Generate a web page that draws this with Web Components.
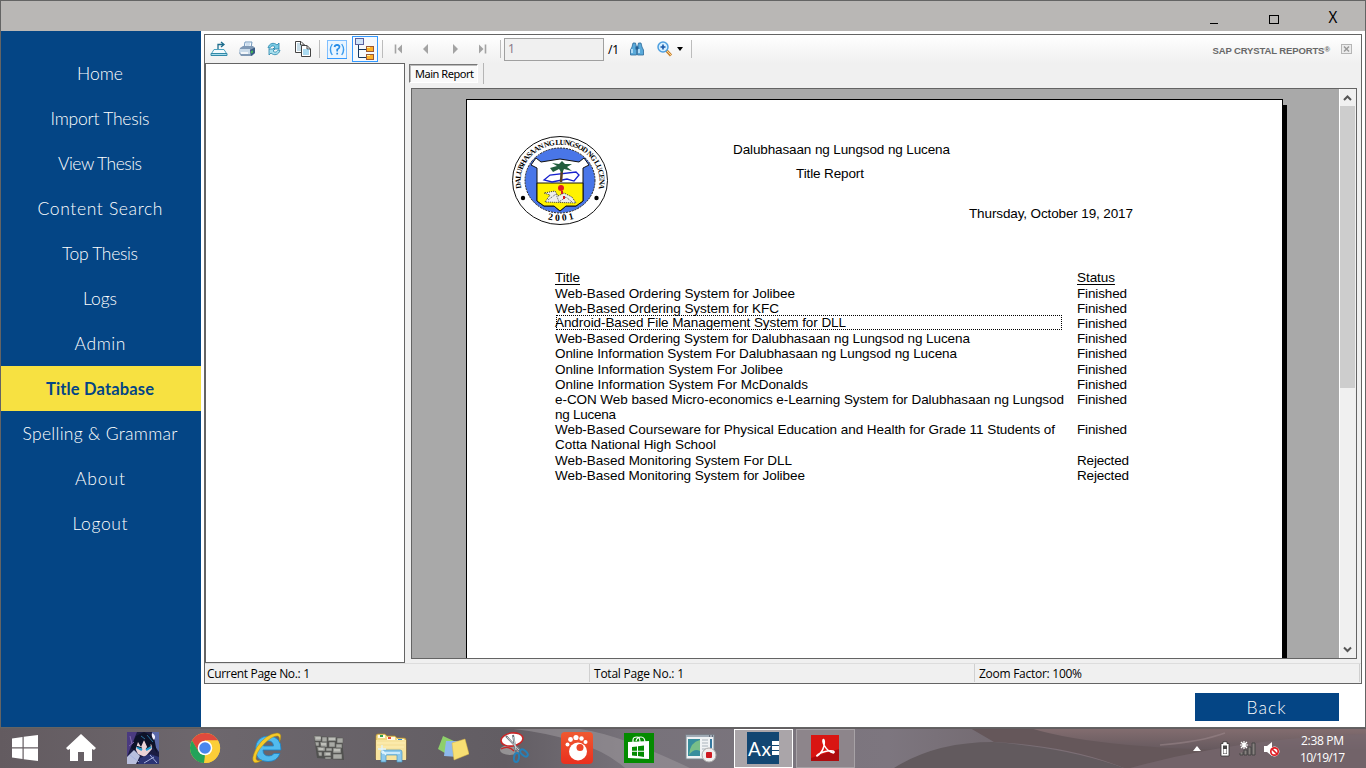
<!DOCTYPE html>
<html lang="en">
<head>
<meta charset="utf-8">
<title>Title Report</title>
<style>
html,body{margin:0;width:1366px;height:768px;overflow:hidden;background:#fff}
</style>
</head>
<body>
<desktop-shell></desktop-shell>
<script>
const define=(name,html,setup)=>{
  const t=document.createElement('template');
  t.innerHTML=html;
  customElements.define(name,class extends HTMLElement{
    constructor(){super();this.attachShadow({mode:'open'}).append(t.content.cloneNode(true));}
    connectedCallback(){if(setup)setup(this,this.shadowRoot);}
  });
};

/* Text run whose tracking is adjusted so that it spans the width in "w". */
define('fit-text',`<style>:host{display:inline-block;white-space:pre;text-align:left}:host([line]) span{text-decoration:underline;text-decoration-thickness:1px;text-underline-offset:2px;text-decoration-skip-ink:none}span{display:inline-block}</style><span><slot></slot></span>`,(el,root)=>{
  const w=+el.getAttribute('w'),s=root.querySelector('span');
  const n=el.textContent.length;
  el.style.width=w+'px';
  const nat=s.getBoundingClientRect().width;
  if(n>1&&nat)s.style.letterSpacing=((w-nat)/(n-1))+'px';
});

const icons={
export:[18,16,`<path d="M8 10V3.500H13M11 1L14 3.500L11 6" fill="none" stroke="#1d6c8c" stroke-width="1.300"/><path d="M4 8.500L1.500 12.500H16.500L14 8.500Z" fill="#f2fafd" stroke="#4da3c0"/><path d="M1 12.500H17V14.500H1Z" fill="#a9dcec" stroke="#3089a8"/>`],
print:[18,16,`<path d="M6 7L7 1H14L13 7" fill="#f4faff" stroke="#7298bd"/><path d="M8 3h4M7.500 5h4" stroke="#a9c2da"/><path d="M2 7L5 5H15L17 7V12L14 15H3L1 12Z" fill="#8099b5"/><path d="M2 8H12V13H3L1 11Z" fill="#cadbea"/><path d="M12 9L17 6.500V12L13 15Z" fill="#385b83"/><path d="M3 12H10" stroke="#fff" stroke-width="1.500"/><path d="M13 10l2-.6v2l-2 1z" fill="#43b853"/>`],
refresh:[16,16,`<path d="M2 7C3 2 8 1 11 4L13 2V8H7L9 6C7 4 5 5 4 7Z" fill="#7bcbe4" stroke="#2784ab" stroke-width=".8"/><path d="M14 9C13 14 8 15 5 12L3 14V8H9L7 10C9 12 11 11 12 9Z" fill="#a8e0ee" stroke="#2784ab" stroke-width=".8"/>`],
copy:[18,18,`<path d="M1.500 1.500H7L10.500 5V12.500H1.500Z" fill="#fff" stroke="#444"/><path d="M6.500 1.500V5H10.500" fill="none" stroke="#444"/><path d="M3 4h3M3 6h5M3 8h5M3 10h5" stroke="#8bb9d0"/><path d="M7.500 5.500H13L16.500 9V16.500H7.500Z" fill="#fff" stroke="#444"/><path d="M13 5.500V9H16.500" fill="none" stroke="#444"/><path d="M9 10h6M9 12h6M9 14h6" stroke="#58b8e4" stroke-width="1.200"/>`],
help:[20,20,`<rect x=".5" y=".5" width="19" height="18" fill="#eaf5ff" stroke="#80bfff"/><path d="M0 18.500H20" stroke="#3399ff"/><path d="M5.300 4Q1.500 9.500 5.300 15M14.700 4Q18.500 9.500 14.700 15" fill="none" stroke="#3a9bed" stroke-width="1.300"/><path d="M7.500 7Q8 4.800 10 4.800Q12.600 5 12.500 7Q12.300 8.500 10.200 9.500V11.400M10.200 12.800v1.800" fill="none" stroke="#258be7" stroke-width="1.700"/>`],
tree:[26,26,`<rect x=".5" y=".5" width="25" height="25" fill="#f6f9fd" stroke="#3399ff"/><path d="M6.500 8V21.500H14M6.500 13.500H14" fill="none" stroke="#17375e"/><rect x="3.500" y="2.500" width="8" height="6" fill="#cfe4fa" stroke="#5b5f9c"/><rect x="14.500" y="10.500" width="7" height="5" fill="#ffb128" stroke="#9a5836"/><rect x="14.500" y="18.500" width="7" height="5" fill="#ffb128" stroke="#9a5836"/><path d="M15 11.500h3M15 19.500h3" stroke="#fff09c"/>`],
first:[12,12,`<path d="M2.500 1.500V10.500" stroke="#a3a3a3" stroke-width="1.600"/><path d="M9 1.500V10.500L4.500 6Z" fill="#a3a3a3"/>`],
prev:[12,12,`<path d="M8 1V11L3 6Z" fill="#a3a3a3"/>`],
next:[12,12,`<path d="M4 1V11L9 6Z" fill="#a3a3a3"/>`],
last:[12,12,`<path d="M9.500 1.500V10.500" stroke="#a3a3a3" stroke-width="1.600"/><path d="M3 1.500V10.500L7.500 6Z" fill="#a3a3a3"/>`],
find:[14,14,`<path d="M2 5L3 1H5.500L6.500 5V13H.5V8Z" fill="#5aaada" stroke="#2c699b" stroke-width=".8"/><path d="M12 5L11 1H8.500L7.500 5V13H13.500V8Z" fill="#5aaada" stroke="#2c699b" stroke-width=".8"/><rect x="5.500" y="4.500" width="3" height="3" fill="#245f92"/><path d="M2 7v4M9 7v4" stroke="#ccecff" stroke-width="1.500"/>`],
zoom:[16,16,`<path d="M9 9L14 14.500" stroke="#c9822f" stroke-width="3"/><path d="M10 10L14 14" stroke="#ffd88f"/><circle cx="6" cy="6" r="5" fill="#d7f0ff" stroke="#4d9fe0" stroke-width="1.500"/><path d="M3.500 6h5M6 3.500v5" stroke="#1857a8" stroke-width="1.600"/>`],
closex:[11,11,`<rect x=".5" y=".5" width="10" height="9" fill="#ececec" stroke="#b5b5b5"/><path d="M3 2.500L8 7.500M8 2.500L3 7.500" stroke="#999" stroke-width="1.500"/>`],
up:[17,17,`<path d="M5 11L8.500 7.500L12 11" fill="none" stroke="#555" stroke-width="2"/>`],
down:[17,17,`<path d="M5 6.500L8.500 10L12 6.500" fill="none" stroke="#555" stroke-width="2"/>`],
windows:[28,28,`<path d="M1 4.500L11.500 3V13.300H1ZM12.700 2.800L27 1V13.300H12.700ZM1 14.500H11.500V25L1 23.500ZM12.700 14.500H27V27L12.700 25.200Z" fill="#fff"/>`],
home:[32,30,`<path d="M16 1L31 15L29 17L27 16V28H19V19H13V28H5V16L3 17L1 15Z" fill="#fff"/>`],
anime:[32,32,`<rect width="32" height="32" fill="#1b1c42"/><path d="M0 0H10L3 17L0 25Z" fill="#4a3a80"/><path d="M25 0H32V20L27 13Z" fill="#5a68a8"/><path d="M9 9L24 8L25 17L18 25L11 22L8 16Z" fill="#ecd3d6"/><path d="M4 16L9 4L17 0L27 5L30 21L24 12L21 17L17 8L14 15L11 10L8 19Z" fill="#0d1228"/><path d="M25 1Q30 4 27 8Q24 5 25 1Z" fill="#eef"/><path d="M10 15L15 18M19 18L24 15" stroke="#1c9bd0" stroke-width="2.400"/><path d="M9 14L15 16M19 16.500L24 13.500" stroke="#123"/><path d="M14 4L18 7M20 3L26 10" stroke="#276f9b"/><path d="M0 25L7 18L13 24L9 32H0Z" fill="#b9bfdd"/><path d="M13 26L23 22L32 25V32H11Z" fill="#2c3474"/><path d="M3 23L12 30M17 31L27 25M23 23L30 31" stroke="#a7b1df"/><path d="M3 4L5 12M2 14L7 10" stroke="#8069ad"/>`],
chrome:[32,32,`<circle cx="16" cy="16" r="15" fill="#fbce38"/><path d="M3 8.500A15 15 0 0 1 29 8.500H16L9.500 20Z" fill="#de4a3d"/><path d="M3 8.500L9.800 20L16 23L15 31A15 15 0 0 1 3 8.500Z" fill="#24a35a"/><path d="M16 8.500H29A15 15 0 0 1 15 31L22 19Z" fill="#fbce38"/><circle cx="16" cy="16" r="7.300" fill="#fff"/><circle cx="16" cy="16" r="5.800" fill="#4886ee"/>`],
ie:[32,32,`<path d="M30 18H12Q12 24 18 24Q21 24 23 21.500H29Q26 29.500 17 29.500Q4.500 29.500 4.500 17Q5 4.500 17.500 4Q30.500 4.500 30 18ZM12.500 14H22.500Q22 9 17.500 9Q13 9 12.500 14Z" fill="#52bbee" stroke="#1983c6" stroke-width=".8"/><path d="M28.500 10Q32 1 26 1Q15 2 6 15Q-1 28 3.500 30.500Q6.500 31.500 11 28Q6 30 5 27Q4.500 21 13 12Q22 3 27 4Q29 5 28.500 10Z" fill="#f6ca28" stroke="#ae8910" stroke-width=".5"/>`],
wall:[32,32,`<path d="M1 4L29 6L31 28L4 26Z" fill="#50514f"/><g fill="#a9aaa5" stroke="#5f605d" stroke-width=".6"><path d="M1 4h7v5H2zM9 5h5v5H9zM15 5h8v4h-8zM24 6h6v5h-6zM2 10h4v4H3zM7 10h7v5H8zM16 10h6v5h-6zM23 12h6v4h-6zM4 15h8v4H5zM13 16h6v3h-6zM20 16h8v5h-8zM5 20h4v4H6zM11 20h7v4h-7zM20 22h9v5h-9zM12 25h6v2h-6z"/></g><path d="M3 6h5M16 7h6M8 12h5M21 18h6M6 17h4M13 22h4" stroke="#d3d4cd"/>`],
explorer:[34,32,`<path d="M2 4Q2 2 4 2H11L13 4H21L23 6H30Q32 6 32 8V27H2Z" fill="#f1d981" stroke="#b58d2c" stroke-width=".7"/><path d="M4 3h7v3H4zM13 5h8v3h-8zM23 7h7v3h-7z" fill="#fffbe6"/><path d="M6 3h3v2H6z" fill="#32a24b"/><path d="M14 5h3v2h-3z" fill="#e54a35"/><path d="M24 7h4v2h-4z" fill="#318bd4"/><path d="M2 8H32V28H2Z" fill="#f7e39e"/><path d="M3 11H31M3 15H30" stroke="#fff0b6"/><path d="M7 30V20Q7 18 9 18H26Q28 18 28 20V30H23V23H12V30Z" fill="#8dc9ed" stroke="#4a95bf" stroke-width=".7"/><path d="M9 19L12 23M8 21h18M8 13v8M4 17h8" stroke="#dff5ff" stroke-width="1.300"/>`],
notes:[32,30,`<path d="M6 3L19 9L13 23L1 16Z" fill="#8ed06a"/><path d="M9 8L22 8L21 24L7 23Z" fill="#8db9eb"/><path d="M15 10L28 6L32 21L17 27Z" fill="#f7df73" stroke="#dbb744" stroke-width=".5"/>`],
snip:[32,32,`<ellipse cx="11" cy="18" rx="10" ry="5" fill="#aaa" opacity=".7"/><ellipse cx="13" cy="7.500" rx="11" ry="6.500" fill="#fff" stroke="#c92727" stroke-width="1.600" transform="rotate(-8 13 7.500)"/><path d="M2 17Q9 13 15 19" stroke="#c92727" stroke-width="1.300" fill="none"/><path d="M7 4L21 19M14 3L17 20" stroke="#6d747b" stroke-width="2"/><path d="M8 5L20 18M14.500 5L17 18" stroke="#e0e4e7" stroke-width=".8"/><g fill="none" stroke="#2680b8" stroke-width="2"><ellipse cx="25" cy="21" rx="2.500" ry="4.500" transform="rotate(-48 25 21)"/><ellipse cx="17.500" cy="25.500" rx="2.500" ry="4.500" transform="rotate(8 17.500 25.500)"/></g>`],
gom:[32,32,`<defs><linearGradient id="g" x2="0" y2="1"><stop stop-color="#ef5930"/><stop offset="1" stop-color="#ea301f"/></linearGradient></defs><rect width="32" height="32" rx="4" fill="url(#g)"/><g fill="#fff"><circle cx="17" cy="19.500" r="9"/><circle cx="6.500" cy="12.500" r="2"/><circle cx="9.500" cy="7.500" r="2.400"/><circle cx="15" cy="5.500" r="2.600"/><circle cx="20.500" cy="6.500" r="2.200"/><circle cx="24.500" cy="10" r="2"/></g><circle cx="19" cy="15.500" r="3.500" fill="#ed4528"/>`],
store:[30,30,`<rect width="30" height="30" fill="#048b00"/><path d="M4 9L25 8V26L4 25Z" fill="#fff"/><path d="M9 10V7Q9 4 13 4Q16 4 16 9M12 8Q13 4 17 4Q21 4 21 10" fill="none" stroke="#fff" stroke-width="1.200"/><path d="M8 14l5-.6v4.300H8zm6-.7l6-.8v5.200h-6zM8 18.700h5V23l-5-.5zm6 0h6v5.200l-6-.8z" fill="#048b00"/>`],
recorder:[32,30,`<rect x="1" y="2" width="28" height="24" fill="#eff2f4" stroke="#7b8890"/><path d="M1 3H29" stroke="#9faab5" stroke-width="2"/><path d="M24 3h1m2 0h1" stroke="#334"/><path d="M3 6h12v17H3z" fill="#388e9d"/><path d="M4 22Q5 9 15 7V18Q9 15 4 22Z" fill="#78be88"/><path d="M17 7h6M17 10h6M17 13h6M17 16h4" stroke="#aab4bc"/><path d="M26 6v9" stroke="#3478a0" stroke-width="2"/><circle cx="24" cy="22" r="7" fill="#eee" stroke="#aaa"/><rect x="21" y="19" width="6" height="6" rx="1" fill="#cd1920"/>`],
pdf:[28,26,`<rect width="28" height="26" fill="#ae0b0e"/><path d="M0 0H28V14L0 23Z" fill="#d91512"/><path d="M6 21Q11 18 13 11Q14 5 12.500 4.500Q11 5 13 10Q17 17 22.500 18Q24 17 22 16Q15 15 7 19.500Q5 21 6 21Z" fill="none" stroke="#fff" stroke-width="1.500"/>`],
tri:[8,6,`<path d="M0 5L4 0L8 5Z" fill="#fff"/>`],
battery:[10,16,`<path d="M3 .7H7V2.500H9V15H1V2.500H3Z" fill="#fff" stroke="#333" stroke-width=".8"/><path d="M3 4.500H7V13H3Z" fill="#444"/><path d="M3.500 8H6.500V12.500H3.500Z" fill="#fff"/>`],
signal:[17,15,`<path d="M1 12v2h3v-3M5 14V9h3v5zM9 14V6h3v8zM13 14V2h3v12z" fill="#87817f" stroke="#444"/><path d="M5 0v8M1 4h8M2 1l6 6M8 1L2 7" stroke="#fff" stroke-width="1.200"/>`],
volume:[17,16,`<path d="M1 5H4L9 1V15L4 11H1Z" fill="#fff"/><circle cx="11.500" cy="10.500" r="4.500" fill="#e44" stroke="#fff"/><circle cx="11.500" cy="10.500" r="3.700" fill="#fff" stroke="#df1e24" stroke-width="1.700"/><path d="M9 8L14 13" stroke="#df1e24" stroke-width="1.700"/>`]
};
define('app-icon',`<style>:host{display:block;flex:none}svg{display:block}</style><div></div>`,(el,root)=>{
  const [w,h,p]=icons[el.getAttribute('name')];
  root.querySelector('div').innerHTML=`<svg width="${w}" height="${h}" viewBox="0 0 ${w} ${h}">${p}</svg>`;
});

define('title-bar',`<style>
:host{display:flex;justify-content:flex-end;box-sizing:border-box;height:30px;background:#b9b7b5;font:16px "Noto Sans",sans-serif;color:#000}
div{width:60px;display:flex;justify-content:center}
.m i{width:8px;height:1px;background:#000;margin-top:22px}
.r i{width:8px;height:7px;border:1px solid #000;margin-top:14px;margin-right:1px}
.x{line-height:30px;font-size:15px}.x span{transform:scaleY(1.12);display:block}
</style><div class="m"><i></i></div><div class="r"><i></i></div><div class="x" style="width:58px"><span>X</span></div><b style="width:3px"></b>`);

define('nav-item',`<style>:host{display:flex;height:45px;align-items:center;justify-content:center;color:#fff;font:300 17.500px/45px Lato,sans-serif}
:host([active]){background:#f7e141;color:#044585;font-weight:700;font-size:16.500px;line-height:46px}
</style><slot></slot>`);
define('side-nav',`<style>:host{display:block;box-sizing:border-box;width:200px;height:696px;background:#044585;padding-top:20px}fit-text{position:relative;left:-1px}</style>
<nav>${[['Home',46],['Import Thesis',99],['View Thesis',84],['Content Search',125],['Top Thesis',76],['Logs',34],['Admin',51],['Title Database',108,1],['Spelling &amp; Grammar',155],['About',50],['Logout',55]].map(([t,w,a])=>`<nav-item ${a?'active':''}><fit-text w="${w}">${t}</fit-text></nav-item>`).join('')}</nav>`);

define('tool-bar',`<style>
:host{display:flex;height:28px;align-items:center;background:linear-gradient(#fff,#f0f0f0);font:12px "Noto Sans",sans-serif;color:#000;padding-left:5px}
.s{width:1px;height:18px;background:#bcbcbc}
.n{box-sizing:border-box;width:100px;height:23px;border:1px solid #a0a0a0;background:#f0f0f0;color:#8b7b8b;line-height:19px;padding-left:3px}
.d{border:3px solid transparent;border-top:4px solid #000;border-bottom:0}
.brand{font:bold 9.500px "Liberation Sans",sans-serif;color:#686868;margin-left:auto;padding-top:3px}
sup{font-size:7.500px;line-height:0;vertical-align:2px}
</style>
<app-icon name="export"></app-icon><app-icon name="print" style="margin-left:10px"></app-icon><app-icon name="refresh" style="margin-left:10px"></app-icon><app-icon name="copy" style="margin-left:12px"></app-icon>
<i class="s" style="margin-left:7px"></i><app-icon name="help" style="margin:1px 0 0 7px"></app-icon><app-icon name="tree" style="margin-left:5px"></app-icon><i class="s" style="margin-left:4px"></i>
<app-icon name="first" style="margin-left:10px"></app-icon><app-icon name="prev" style="margin-left:15px"></app-icon><app-icon name="next" style="margin-left:17px"></app-icon><app-icon name="last" style="margin-left:15px"></app-icon>
<i class="s" style="margin-left:12px"></i><div class="n" style="margin-left:3px">1</div><fit-text w="11" style="margin-left:4px">/1</fit-text>
<app-icon name="find" style="margin-left:11px"></app-icon><app-icon name="zoom" style="margin-left:13px"></app-icon><i class="d" style="margin-left:4px"></i><i class="s" style="margin-left:8px"></i>
<div class="brand"><fit-text w="112">SAP CRYSTAL REPORTS</fit-text><sup>®</sup></div><app-icon name="closex" style="margin:0 9px 0 11px"></app-icon>`);

define('school-seal',`<style>:host{display:block}svg{display:block;overflow:visible}</style>
<svg width="96" height="90" viewBox="0 0 96 90"><defs><path id="arc" d="M11 58A39.500 36.500 0 1 1 85 58"/><path id="low" d="M22 78Q48 92 76 77"/></defs>
<ellipse cx="48" cy="44.500" rx="47.500" ry="44" fill="#fff" stroke="#111"/><ellipse cx="48" cy="44.500" rx="35" ry="32.500" fill="#4976e8" stroke="#222" stroke-dasharray="2 1"/>
<path d="M24 22L29 26L48 23L67 26L72 22L77 29L71 32V65L64 70H54L48 75L42 70H32L25 65V32L19 29Z" fill="#fff" stroke="#111"/><path d="M25 47H71V65L64 70H54L48 75L42 70H32L25 65Z" fill="#fff200" stroke="#111"/>
<path d="M32 44L38 39L64 36L67 39L62 45L55 43L40 46Z" fill="none" stroke="#1721cd" stroke-width="1.300"/><path d="M49 46L50 32" stroke="#593d23" stroke-width="2.500"/><path d="M38 32L45 30L40 27L47 28L50 25L53 28L60 28L55 31L60 35L52 33L50 37L47 33L41 36Z" fill="#235e3d"/>
<path d="M33 66L38 59L32 57L43 55L46 60L52 57L60 61L64 67Z" fill="#eee" stroke="#333" stroke-dasharray="1 1"/><path d="M36 64L44 58L47 66L54 61L60 66" stroke="#555" fill="none" stroke-dasharray="1 1"/><circle cx="49" cy="52" r="3" fill="#df1d22"/><path d="M50 55v3M52 60v3" stroke="#d11b20" stroke-width="2" fill="none"/>
<circle cx="11" cy="62" r="2.200"/><circle cx="84.500" cy="62" r="2.200"/>
<text font-family="Liberation Serif,serif" font-size="7.600" letter-spacing="-.8" font-weight="bold"><textPath href="#arc" startOffset="50%" text-anchor="middle">DALUBHASAAN NG LUNGSOD NG LUCENA</textPath></text><text font-family="Liberation Serif,serif" font-size="9.500" font-weight="bold" letter-spacing="2.500"><textPath href="#low" startOffset="52%" text-anchor="middle">2001</textPath></text></svg>`);

const rows=[
[15,[['Web-Based Ordering System for Jolibee',240]],'Finished'],
[15,[['Web-Based Ordering System for KFC',224]],'Finished'],
[15,[['Android-Based File Management System for DLL',291]],'Finished',1],
[15,[['Web-Based Ordering System for Dalubhasaan ng Lungsod ng Lucena',415]],'Finished'],
[16,[['Online Information System For Dalubhasaan ng Lungsod ng Lucena',402]],'Finished'],
[15,[['Online Information System For Jolibee',228]],'Finished'],
[15,[['Online Information System For McDonalds',253]],'Finished'],
[30,[['e-CON Web based Micro-economics e-Learning System for Dalubhasaan ng Lungsod',509],['ng Lucena',61]],'Finished'],
[31,[['Web-Based Courseware for Physical Education and Health for Grade 11 Students of',500],['Cotta National High School',161]],'Finished'],
[15,[['Web-Based Monitoring System For DLL',237]],'Rejected'],
[15,[['Web-Based Monitoring System for Jolibee',250]],'Rejected']];
define('report-page',`<style>
:host{display:grid;grid-template-columns:816px;align-content:start;box-sizing:border-box;width:817px;height:559px;background:#fff;border:1px solid #000;border-bottom:0;font:13.500px/15px "Liberation Sans",sans-serif;color:#000}
header{display:grid;grid-template-columns:45px 96px 125px 401px;height:170px}
school-seal{margin-top:36px}
.h{grid-column:4;grid-row:1;display:flex;flex-direction:column;padding-top:42px}
.h fit-text{height:15px}
main{padding-left:88px}
.row{display:grid;grid-template-columns:508px 60px;column-gap:14px}
.row>div{display:flex;flex-direction:column;align-items:flex-start}
.row fit-text{height:15px}
.row .sel{box-sizing:border-box;height:15px;width:506px;margin:-1px 0 0 1px;border:1px dotted #000;line-height:14px}
.sel fit-text{margin-left:-2px}
</style>
<header><school-seal style="grid-column:2"></school-seal><div class="h"><fit-text w="217">Dalubhasaan ng Lungsod ng Lucena</fit-text><fit-text w="68" style="margin:9px 0 0 63px">Title Report</fit-text><fit-text w="164" style="margin:25px 0 0 236px">Thursday, October 19, 2017</fit-text></div></header>
<main><div class="row" style="height:16px"><div><fit-text line w="25">Title</fit-text></div><div><fit-text line w="38">Status</fit-text></div></div>
${rows.map(([h,l,s,a])=>`<div class="row" style="height:${h}px"><div class="${a?'sel':''}">${l.map(([t,w])=>`<fit-text w="${w}">${t}</fit-text>`).join('')}</div><div><fit-text w="${s=='Finished'?50:52}">${s}</fit-text></div></div>`).join('')}</main>`);

define('scroll-bar',`<style>:host{display:flex;flex-direction:column;width:17px;background:#f0f0f0;justify-content:space-between;box-sizing:border-box;border-left:1px solid #fff}i{display:block;width:15px;height:282px;background:#cdcdcd;margin-bottom:auto}app-icon{margin-left:-1px}</style><app-icon name="up"></app-icon><i></i><app-icon name="down"></app-icon>`);

define('report-viewer',`<style>
:host{display:grid;grid-template-rows:28px 600px 20px;box-sizing:border-box;width:1158px;height:650px;border:1px solid #646464;background:#f0f0f0;font:12px "Open Sans",sans-serif;color:#000}
.body{display:grid;grid-template-columns:200px 952px;column-gap:4px}
.tree{box-sizing:border-box;background:#fff;border:1px solid #646464;width:200px}
.tabs{display:flex;height:25px;align-items:flex-start}
.tab{box-sizing:border-box;width:69px;height:19px;margin:1px 0 0 0;border:1px solid #fff;border-top:1px solid #777;border-left:1px solid #777;box-shadow:inset 1px 1px #bbb;background:#fafafa;font:11px/17px "Noto Sans",sans-serif;padding-left:5px}
.sep{width:1px;height:21px;background:#b5b5b5;margin-left:5px}
.canvas{box-sizing:border-box;width:946px;height:571px;margin-left:2px;border:1px solid #646464;background:#a9a9a9;display:flex;justify-content:space-between;overflow:hidden}
.sheet{display:flex;padding:10px 0 0 54px}
.shade{width:4px;height:560px;background:#000;margin-top:6px}
footer{display:grid;grid-template-columns:385px 385px 385px;border-top:1px solid #ddd;line-height:20px;box-sizing:border-box;height:20px}
footer div{box-sizing:border-box;height:18px;border-right:1px solid #d0d0d0;padding-left:2px}footer div+div{padding-left:4px}
</style>
<tool-bar></tool-bar><div class="body"><div class="tree"></div><section><div class="tabs"><div class="tab"><fit-text w="59">Main Report</fit-text></div><i class="sep"></i></div><div class="canvas"><div class="sheet"><report-page></report-page><i class="shade"></i></div><scroll-bar></scroll-bar></div></section></div>
<footer><div><fit-text w="103">Current Page No.: 1</fit-text></div><div><fit-text w="90">Total Page No.: 1</fit-text></div><div><fit-text w="103">Zoom Factor: 100%</fit-text></div></footer>`);

define('back-button',`<style>:host{display:block;box-sizing:border-box;width:144px;height:28px;background:#044585;color:#fff;font:300 17.500px/29px Lato,sans-serif;text-align:center;padding-right:2px}</style><fit-text w="39">Back</fit-text>`);

define('task-bar',`<style>
:host{display:flex;height:40px;overflow:hidden;position:relative;background:#716a70;color:#fff;font:12px/17px "Open Sans",sans-serif}
.bg{position:absolute;inset:0}
.t{position:relative;width:62px;display:flex;align-items:center;justify-content:center;flex:none}
.t.s{width:50px}
.b{box-sizing:border-box;width:59px;height:39px;border:1px solid #a7a2a6;background:#8d858b;display:flex;align-items:center;justify-content:center}
.b.a{border:1px solid #fff;background:#aaa5a9}
.ax{width:32px;height:32px;background:#124672;color:#fff;display:flex;align-items:center;font:19px Lato,sans-serif;box-sizing:border-box;padding-left:1px}
.ax b{display:grid;gap:1px;margin-left:1px}.ax i{width:7px;height:4px;background:#fff}
.tray{position:relative;margin-left:auto;display:flex;align-items:center;padding-right:21px}
.time{display:flex;flex-direction:column;align-items:center;margin:2px 0 0 20px}
</style>
<svg class="bg" width="1366" height="40" viewBox="0 0 1366 40" preserveAspectRatio="none"><defs><linearGradient id="a"><stop stop-color="#635b60"/><stop offset=".15" stop-color="#6d676d"/><stop offset=".37" stop-color="#625d63"/><stop offset=".46" stop-color="#77727a"/><stop offset=".65" stop-color="#7d767f"/><stop offset=".72" stop-color="#756c73"/><stop offset=".85" stop-color="#837178"/><stop offset="1" stop-color="#796a72"/></linearGradient><linearGradient id="v" x2="0" y2="1"><stop stop-color="#8b7375"/><stop offset="1" stop-color="#65595f"/></linearGradient></defs><rect width="1366" height="40" fill="url(#a)"/><path d="M505 0Q590 9 625 40H690Q610 2 570 0Z" fill="#9a959a" opacity=".6"/><path d="M970 0L994 14Q1070 18 1124 40H1366V0Z" fill="#65575a"/><path d="M894 40Q935 14 993 14Q1070 20 1124 40Z" fill="#625a5e"/><path d="M1030 0Q1120 28 1366 21V0Z" fill="url(#v)" opacity=".8"/><path d="M1130 40Q1240 10 1366 6V40Z" fill="#77686f" opacity=".7"/><path d="M1160 17Q1200 14 1225 5" fill="none" stroke="#a08b90" opacity=".5" stroke-width="1.500"/><path d="M0 .5H1366" stroke="#625d60"/></svg>
<div class="t s"><app-icon name="windows"></app-icon></div>
${['home','anime','chrome','ie','wall','explorer','notes','snip','gom','store','recorder'].map(n=>`<div class="t"><app-icon name="${n}"></app-icon></div>`).join('')}
<div class="t"><div class="b a"><div class="ax"><fit-text w="23">Ax</fit-text><b><i></i><i></i><i></i></b></div></div></div><div class="t"><div class="b"><app-icon name="pdf"></app-icon></div></div>
<div class="tray"><app-icon name="tri" style="margin-top:2px"></app-icon><app-icon name="battery" style="margin:2px 0 0 19px"></app-icon><app-icon name="signal" style="margin-left:9px"></app-icon><app-icon name="volume" style="margin:2px 0 0 7px"></app-icon><div class="time"><fit-text w="43">2:38 PM</fit-text><fit-text w="45">10/19/17</fit-text></div></div>`);

define('desktop-shell',`<style>
:host{display:flex;flex-direction:column;width:1366px;height:768px}
.win{box-sizing:border-box;height:728px;border:1px solid #646464;background:#fff}
.content{display:flex;height:696px}
.pane{padding:3px 0 0 3px;flex:1;display:flex;flex-direction:column}
back-button{margin:9px 0 0 991px}
</style><div class="win"><title-bar></title-bar><div class="content"><side-nav></side-nav><div class="pane"><report-viewer></report-viewer><back-button></back-button></div></div></div><task-bar></task-bar>`);
</script>
</body>
</html>
